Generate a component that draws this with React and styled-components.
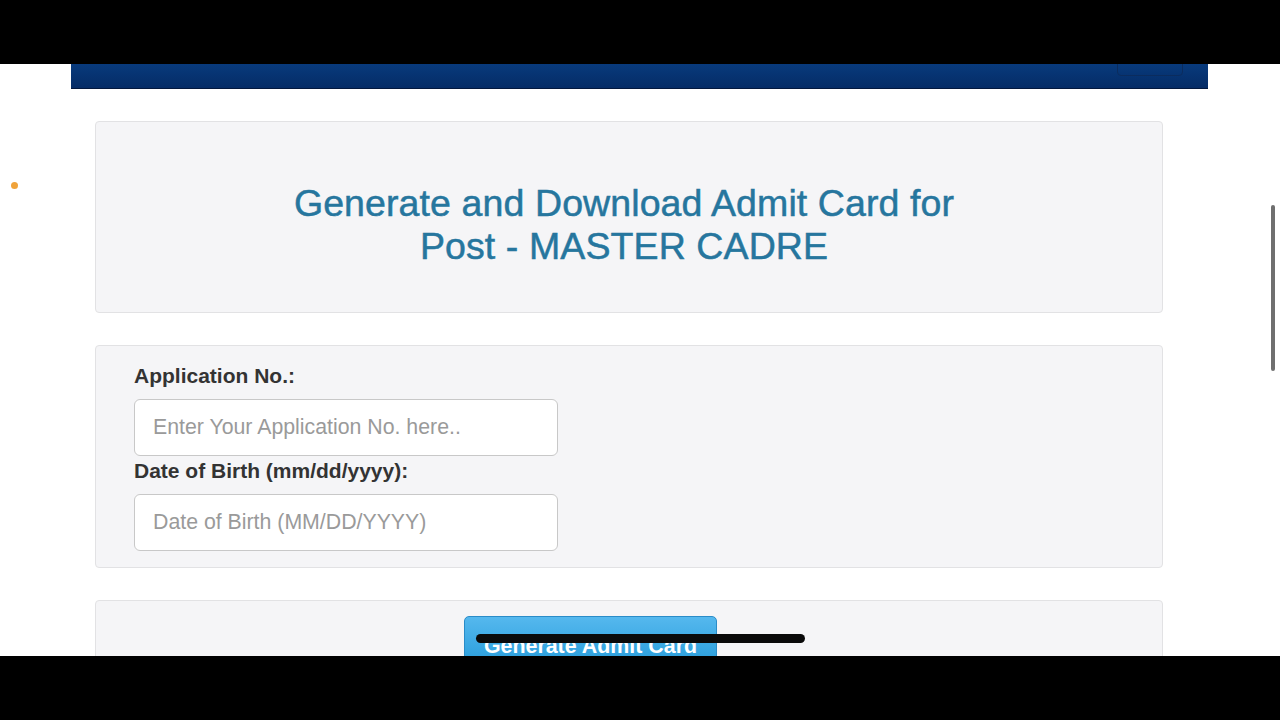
import React from 'react';
import styled, { createGlobalStyle } from 'styled-components';

const GlobalStyle = createGlobalStyle`
  html, body {
    margin: 0;
    padding: 0;
    background: #000;
    font-family: "Liberation Sans", Arial, sans-serif;
  }
`;

const App = () => {
  return (
    <>
      <GlobalStyle />
      <Frame>
        <BlackBar />
        <Viewport>
          <NavBar>
            <NavButton />
          </NavBar>
          <Content>
            <TitlePanel>
              <Title>
                Generate and Download Admit Card for
                <br />
                Post - MASTER CADRE
              </Title>
            </TitlePanel>
            <FormPanel>
              <Label htmlFor="appno">Application No.:</Label>
              <Input id="appno" placeholder="Enter Your Application No. here.." />
              <Label htmlFor="dob">Date of Birth (mm/dd/yyyy):</Label>
              <Input id="dob" placeholder="Date of Birth (MM/DD/YYYY)" />
            </FormPanel>
            <ActionPanel>
              <SubmitButton type="button">Generate Admit Card</SubmitButton>
            </ActionPanel>
          </Content>
          <Dot />
          <ScrollThumb />
          <HomeIndicator />
        </Viewport>
        <BlackBar />
      </Frame>
    </>
  );
};

const Frame = styled.div`
  width: 1280px;
  height: 720px;
  display: flex;
  flex-direction: column;
  overflow: hidden;
`;

const BlackBar = styled.div`
  height: 64px;
  flex-shrink: 0;
  background: #000;
`;

const Viewport = styled.div`
  flex: 1;
  position: relative;
  overflow: hidden;
  background: #fff;
`;

const NavBar = styled.div`
  margin-left: 71px;
  width: 1137px;
  height: 24px;
  background: linear-gradient(180deg, #083a7c 0%, #052c66 100%);
  border-bottom: 1px solid #03183d;
  position: relative;
`;

const NavButton = styled.div`
  position: absolute;
  right: 25px;
  top: -2px;
  width: 64px;
  height: 12px;
  border: 1px solid #0b2c5e;
  border-radius: 0 0 4px 4px;
`;

const Content = styled.div`
  width: 1068px;
  margin: 32px 0 0 95px;
  display: flex;
  flex-direction: column;
  gap: 32px;
`;

const Panel = styled.div`
  background: #f5f5f7;
  border: 1px solid #e2e2e4;
  border-radius: 4px;
  box-sizing: border-box;
`;

const TitlePanel = styled(Panel)`
  height: 192px;
  display: flex;
  align-items: center;
  justify-content: center;
`;

const Title = styled.h2`
  margin: 16px 0 0 -10px;
  text-align: center;
  color: #26769e;
  font-size: 37.5px;
  font-weight: normal;
  line-height: 43px;
  letter-spacing: 0.1px;
  -webkit-text-stroke: 0.5px #26769e;
`;

const FormPanel = styled(Panel)`
  height: 223px;
  padding: 18px 38px 0;
  display: flex;
  flex-direction: column;
  align-items: flex-start;
`;

const Label = styled.label`
  font-size: 21px;
  font-weight: bold;
  color: #333;
  line-height: 24px;
  margin-bottom: 11px;
`;

const Input = styled.input`
  width: 424px;
  height: 57px;
  box-sizing: border-box;
  border: 1px solid #c8c8c8;
  border-radius: 6px;
  padding: 0 18px;
  margin-bottom: 3px;
  font-family: "Liberation Sans", Arial, sans-serif;
  font-size: 21.3px;
  color: #555;
  background: #fff;
  outline: none;

  &::placeholder {
    color: #9a9a9a;
  }
`;

const ActionPanel = styled(Panel)`
  height: 120px;
  padding: 15px 0 0 368px;
`;

const SubmitButton = styled.button`
  width: 253px;
  height: 46px;
  border: 1px solid #2a8cc8;
  border-radius: 5px;
  background: linear-gradient(180deg, #55b8ee 0%, #2c9fdc 100%);
  color: #fff;
  font-family: "Liberation Sans", Arial, sans-serif;
  font-size: 21.4px;
  font-weight: bold;
  padding-top: 15px;
`;

const Dot = styled.div`
  position: absolute;
  left: 11px;
  top: 118px;
  width: 7px;
  height: 7px;
  border-radius: 50%;
  background: #f0a33a;
`;

const ScrollThumb = styled.div`
  position: absolute;
  left: 1271px;
  top: 141px;
  width: 4px;
  height: 166px;
  border-radius: 2px;
  background: #6f6f6f;
`;

const HomeIndicator = styled.div`
  position: absolute;
  left: 476px;
  top: 570px;
  width: 329px;
  height: 9px;
  border-radius: 5px;
  background: #0a0a0a;
`;

export default App;
